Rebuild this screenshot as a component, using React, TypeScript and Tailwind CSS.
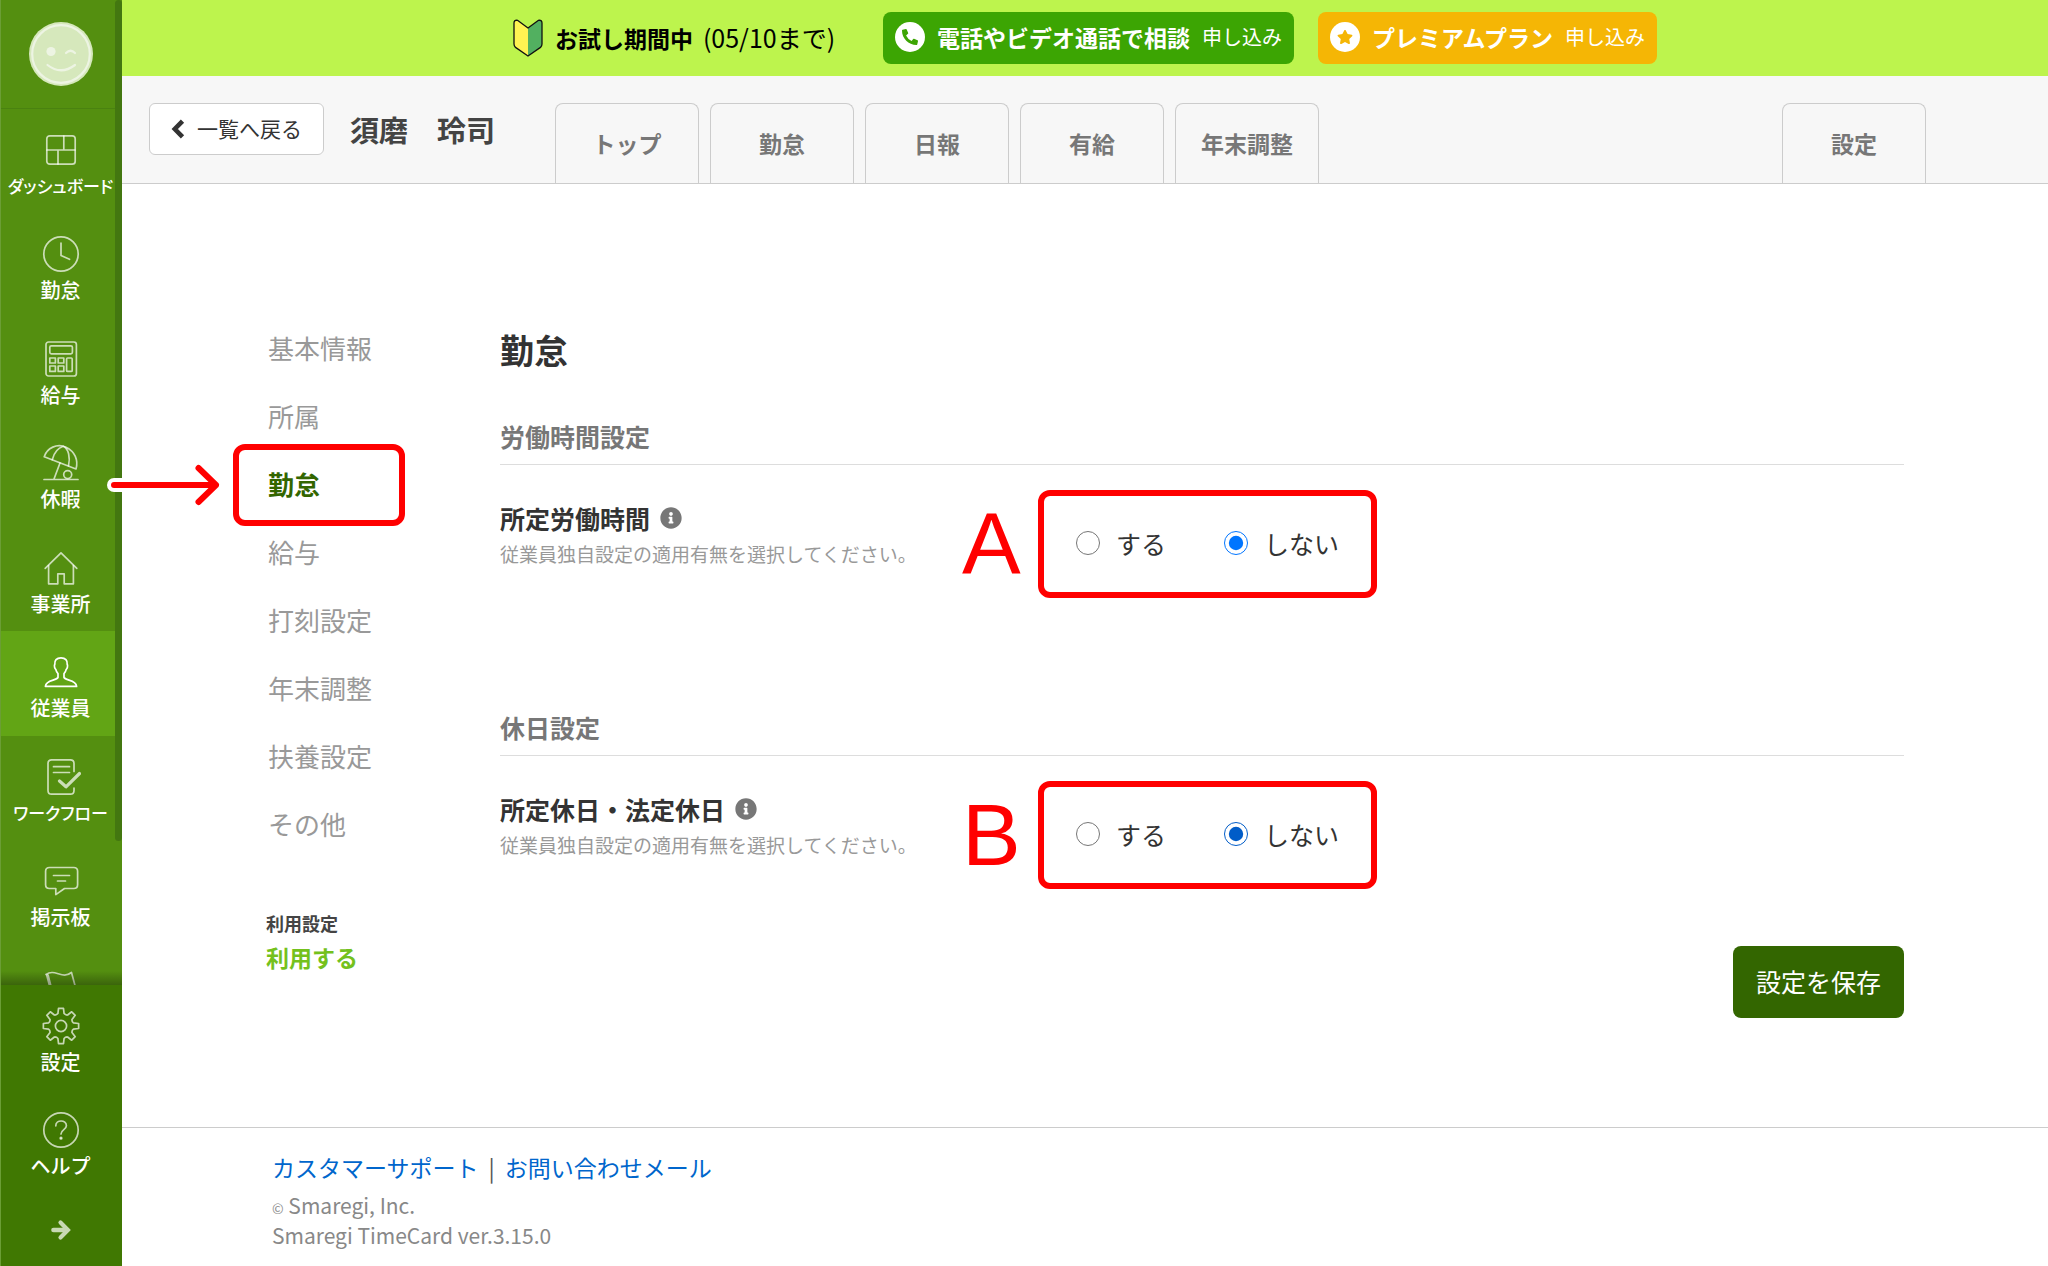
import { ReactNode, useState } from "react";
import { FaInfoCircle, FaPhoneAlt, FaStar } from "react-icons/fa";

const gearPath = () => {
  const point = (radius: number, degrees: number) => {
    const rad = (degrees * Math.PI) / 180;
    return `${(20 + radius * Math.sin(rad)).toFixed(2)} ${(20 - radius * Math.cos(rad)).toFixed(2)}`;
  };
  let d = "";
  for (let i = 0; i < 8; i++) {
    const a = i * 45;
    d += `${i === 0 ? "M" : "L"}${point(12.8, a - 14)} L${point(17.8, a - 8)} L${point(17.8, a + 8)} L${point(12.8, a + 14)} Q${point(11.6, a + 22.5)} ${point(12.8, a + 31)} `;
  }
  return d + "Z";
};

const Icon = ({ children }: { children: ReactNode }) => (
  <svg
    viewBox="0 0 40 40"
    className="h-10 w-10 shrink-0"
    fill="none"
    stroke="currentColor"
    strokeWidth="1.7"
    strokeLinecap="round"
    strokeLinejoin="round"
    aria-hidden="true"
  >
    {children}
  </svg>
);

const icons = {
  dashboard: (
    <Icon>
      <rect x="5.8" y="5.8" width="28.4" height="28.4" rx="3" />
      <path d="M6 20H34M22.8 6V20M17 20V34" />
    </Icon>
  ),
  clock: (
    <Icon>
      <circle cx="20" cy="20" r="17.2" />
      <path d="M20 9V21.5L28.5 25.3" />
    </Icon>
  ),
  calculator: (
    <Icon>
      <rect x="5" y="3" width="30.4" height="34" rx="2.5" />
      <rect x="8.8" y="6.8" width="22.6" height="8" rx="1.5" />
      <rect x="8.8" y="19" width="5.6" height="5" />
      <rect x="8.8" y="27" width="5.6" height="5.4" />
      <rect x="17.2" y="19" width="5.6" height="5" />
      <rect x="17.2" y="27" width="5.6" height="5.4" />
      <rect x="25.6" y="19" width="5.6" height="13.4" rx="1" />
    </Icon>
  ),
  umbrella: (
    <Icon>
      <path d="M3.2 13.8C6 5 16 0 25 4.2C34 8.5 37.5 17 35 26Z" />
      <path d="M11.3 16.6C13 10 17 5 22.3 3.3C27.5 6 29.5 14 27.5 22.8" />
      <path d="M19 20L13 36M3 36.5H37" />
      <circle cx="26.7" cy="31.6" r="4" />
    </Icon>
  ),
  home: (
    <Icon>
      <path d="M4.2 20.3L20 4.8L35.8 20.3" />
      <path d="M7.6 17.5V35.8H16.8V25.8H23.2V35.8H32.4V17.5" />
    </Icon>
  ),
  person: (
    <Icon>
      <path d="M20 5.8C15.5 5.8 13.4 8.4 13.8 12.4C13 13.4 13.6 16.6 14.8 17.4C15.2 19.4 16 20.6 17 21.6V25.4C15.6 29 5 27.4 4.4 34.4H35.6C35 27.4 24.4 29 23 25.4V21.6C24 20.6 24.8 19.4 25.2 17.4C26.4 16.6 27 13.4 26.2 12.4C26.6 8.4 24.5 5.8 20 5.8Z" />
    </Icon>
  ),
  workflow: (
    <Icon>
      <path d="M33 14.5V6.5Q33 2.8 29.3 2.8H10.7Q7 2.8 7 6.5V33.5Q7 37.2 10.7 37.2H29.3Q33 37.2 33 33.5V31" />
      <path d="M12.5 9.7H28.5M12.5 15.5H28.5" />
      <path d="M18.5 24L25 29.8L38.5 16.5" strokeWidth="3.2" />
    </Icon>
  ),
  board: (
    <Icon>
      <path d="M8.5 6.5H32.8Q36.6 6.5 36.6 10.3V23.7Q36.6 27.5 32.8 27.5H23.5L14.8 33.6V27.5H8.5Q4.6 27.5 4.6 23.7V10.3Q4.6 6.5 8.5 6.5Z" />
      <path d="M12.5 14.5H28.5M16.5 20H24.5" />
    </Icon>
  ),
  flag: (
    <Icon>
      <path d="M6.5 9.5L14 38" strokeWidth="3" />
      <path d="M5 8.5C14 2 21 14 30.5 6.5L35.5 25C28 31 20 20 11 27" />
    </Icon>
  ),
  gear: (
    <Icon>
      <path d={gearPath()} />
      <circle cx="20" cy="20" r="5.6" />
    </Icon>
  ),
  help: (
    <Icon>
      <circle cx="20" cy="20" r="17.2" />
      <path d="M14.8 15.8C14.8 9.4 25.4 9.4 25.4 15.8C25.4 19.6 20 19.8 20 24" />
      <circle cx="20" cy="28.2" r="0.8" fill="currentColor" />
    </Icon>
  ),
};

const sideItems = [
  { label: "ダッシュボード", icon: icons.dashboard, small: true },
  { label: "勤怠", icon: icons.clock },
  { label: "給与", icon: icons.calculator },
  { label: "休暇", icon: icons.umbrella },
  { label: "事業所", icon: icons.home },
  { label: "従業員", icon: icons.person, active: true },
  { label: "ワークフロー", icon: icons.workflow, small: true },
  { label: "掲示板", icon: icons.board },
  { label: "", icon: icons.flag },
];

const SideItem = ({
  label,
  icon,
  active,
  small,
}: {
  label: string;
  icon: ReactNode;
  active?: boolean;
  small?: boolean;
}) => (
  <a
    href="#"
    className={`flex min-h-[104px] flex-col items-center pr-0.5 pt-[21px] ${active ? "bg-[#62a515]" : ""}`}
  >
    <span className={active ? "text-white" : "text-white/70"}>{icon}</span>
    <span
      className={`mt-0.5 whitespace-nowrap font-medium leading-7 text-white ${
        small ? "text-[17px] [font-feature-settings:'palt']" : "text-xl"
      }`}
    >
      {label}
    </span>
  </a>
);

const Sidebar = () => (
  <aside className="sticky top-0 flex h-screen w-[122px] shrink-0 flex-col border-l border-[#6b9e35] bg-[#548f10]">
    <div className="relative flex flex-1 flex-col overflow-hidden">
      <div className="flex h-[109px] shrink-0 justify-center border-b border-[#4a8210] pr-0.5 pt-[22px]">
        <svg viewBox="0 0 64 64" className="h-16 w-16" fill="none" aria-hidden="true">
          <circle cx="32" cy="32" r="32" fill="#d6e8bc" />
          <circle cx="32" cy="32" r="28.8" stroke="#edf4e3" strokeWidth="2.2" />
          <circle cx="22" cy="29.5" r="4.6" fill="#edf4e3" />
          <path
            d="M37 31Q41.5 26.5 46 31M18.5 43Q32 53.5 46 43"
            stroke="#edf4e3"
            strokeWidth="2.2"
            strokeLinecap="round"
          />
        </svg>
      </div>
      <nav className="grid h-[940px] shrink-0 auto-rows-fr">
        {sideItems.map((item) => (
          <SideItem key={item.label} {...item} />
        ))}
      </nav>
      <div className="absolute right-0 top-0 h-[841px] w-[7px] rounded-full bg-[#437710]" />
      <div className="absolute inset-x-0 bottom-0 h-3.5 bg-linear-to-b from-transparent to-black/30" />
    </div>
    <div className="flex flex-col bg-[#407802]">
      <SideItem label="設定" icon={icons.gear} />
      <SideItem label="ヘルプ" icon={icons.help} />
      <button
        aria-label="メニューを開く"
        className="flex h-[73px] items-center justify-center pr-0.5 text-[#c8d9b4]"
      >
        <svg viewBox="0 0 22 22" className="h-[22px] w-[22px]" fill="none" stroke="currentColor" aria-hidden="true">
          <path d="M3.5 11H16" strokeWidth="4.6" strokeLinecap="round" />
          <path d="M10.5 3.6L17.9 11L10.5 18.400" strokeWidth="4.2" strokeLinecap="round" />
        </svg>
      </button>
    </div>
  </aside>
);

const Banner = () => (
  <div className="flex h-[76px] items-center justify-center bg-[#bdf44d] text-[23px] leading-8">
    <svg viewBox="0 0 30 38" className="mr-3 h-[38px] w-[30px]" aria-hidden="true">
      <path d="M15 9L4.5 1.2Q1 0.8 1 4V25Q1 27 2.5 28.4L15 37Z" fill="#fff352" />
      <path d="M15 9L25.5 1.2Q29 0.8 29 4V25Q29 27 27.5 28.4L15 37Z" fill="#52b060" />
      <path
        d="M15 9L4.8 1.4Q1 0.6 1 4V25Q1 27 2.5 28.4L15 37L27.5 28.4Q29 27 29 25V4Q29 0.6 25.2 1.4Z"
        fill="none"
        stroke="#111"
        strokeWidth="1.3"
        strokeLinejoin="round"
      />
    </svg>
    <p className="pb-0.5 text-black">
      <strong className="font-bold">お試し期間中</strong>
      <span className="ml-2.5 text-[25px]">(05/10まで)</span>
    </p>
    <a href="#" className="ml-12 flex h-[52px] items-center rounded-lg bg-[#3ca503] px-3 pb-0.5 text-white">
      <span className="mr-3 flex h-[30px] w-[30px] items-center justify-center rounded-full bg-white text-[#3ca503]">
        <FaPhoneAlt className="h-4 w-4" />
      </span>
      <strong className="font-bold">電話やビデオ通話で相談</strong>
      <span className="ml-3 text-xl">申し込み</span>
    </a>
    <a href="#" className="ml-6 flex h-[52px] items-center rounded-lg bg-[#f5b605] px-3 pb-0.5 text-white">
      <span className="mr-3 flex h-[30px] w-[30px] items-center justify-center rounded-full bg-white text-[#f5b605]">
        <FaStar className="h-4 w-4" />
      </span>
      <strong className="font-bold">プレミアムプラン</strong>
      <span className="ml-3 text-xl">申し込み</span>
    </a>
  </div>
);

const Tab = ({ label }: { label: string }) => (
  <a
    href="#"
    className="flex h-20 w-36 items-center justify-center rounded-t-lg border border-b-0 border-[#ccc] text-[23px] font-bold text-[#777]"
  >
    {label}
  </a>
);

const Header = () => (
  <header className="flex h-[108px] items-start border-b border-[#ccc] bg-[#f7f7f7] pl-[27px] pr-[122px] pt-[27px]">
    <a
      href="#"
      className="flex h-[52px] w-[175px] items-center justify-center gap-3 rounded-md border border-[#ccc] bg-white text-[21px] text-[#333]"
    >
      <svg viewBox="0 0 14 20" className="h-5 w-3.5" fill="none" stroke="currentColor" aria-hidden="true">
        <path d="M11.500 2.200L3.800 10L11.500 17.800" strokeWidth="4.6" />
      </svg>
      一覧へ戻る
    </a>
    <h1 className="ml-[26px] w-[205px] whitespace-nowrap text-[29px] font-bold leading-[52px] text-[#444]">
      須磨　玲司
    </h1>
    <nav className="flex flex-1 gap-[11px]">
      {["トップ", "勤怠", "日報", "有給", "年末調整"].map((label) => (
        <Tab key={label} label={label} />
      ))}
    </nav>
    <Tab label="設定" />
  </header>
);

const settingsMenu = ["基本情報", "所属", "勤怠", "給与", "打刻設定", "年末調整", "扶養設定", "その他"];

const SettingsMenu = () => (
  <aside className="w-[234px] shrink-0 pt-[129px]">
    <ul>
      {settingsMenu.map((label) =>
        label === "勤怠" ? (
          <li key={label} className="relative flex h-[68px] items-center pl-0.5 text-[26px]">
            <a href="#" className="font-bold text-[#336600]">
              {label}
            </a>
            <div className="pointer-events-none absolute -left-[33px] -top-[5px] h-[82px] w-[172px] rounded-xl border-6 border-[#f00]" />
            <svg
              viewBox="0 0 120 52"
              className="pointer-events-none absolute -left-40 top-2.5 h-[52px] w-[120px]"
              fill="none"
              strokeLinecap="round"
              strokeLinejoin="round"
              aria-hidden="true"
            >
              <path d="M8 26H106" stroke="#fff" strokeWidth="14" />
              <path d="M8 26H110M92.5 9L110 26L92.5 43" stroke="#f00" strokeWidth="6" />
            </svg>
          </li>
        ) : (
          <li key={label} className="flex h-[68px] items-center pl-0.5 text-[26px]">
            <a href="#" className="text-[#999]">
              {label}
            </a>
          </li>
        ),
      )}
    </ul>
    <dl className="mt-[50px] font-bold">
      <dt className="text-lg leading-8 text-[#444]">利用設定</dt>
      <dd className="mt-0.5 text-[23px] leading-8 text-[#74c11d]">利用する</dd>
    </dl>
  </aside>
);

const SettingSection = ({
  heading,
  title,
  name,
  mark,
  accent,
}: {
  heading: string;
  title: string;
  name: string;
  mark: string;
  accent: string;
}) => {
  const [value, setValue] = useState("しない");

  return (
    <section>
      <h3 className="border-b border-[#ddd] pb-2.5 text-[25px] font-bold leading-9 text-[#777]">{heading}</h3>
      <div className="mt-[25px] flex items-start">
        <div className="w-[538px] shrink-0 pt-2.5">
          <h4 className="flex items-center gap-2.5 text-[25px] font-bold leading-9 text-[#333]">
            {title}
            <FaInfoCircle className="h-[22px] w-[22px] text-[#777]" />
          </h4>
          <p className="mt-1 text-[19px] leading-7 text-[#999]">従業員独自設定の適用有無を選択してください。</p>
        </div>
        <div className="relative flex h-[108px] items-center gap-[58px] rounded-xl border-6 border-[#f00] px-8 text-[25px] text-[#333]">
          <span className="absolute right-full mr-6 w-[58px] font-['Liberation_Sans',sans-serif] text-[88px] leading-none text-[#f00]">
            {mark}
          </span>
          {["する", "しない"].map((option) => (
            <label key={option} className="flex items-center gap-4">
              <input
                type="radio"
                name={name}
                value={option}
                checked={value === option}
                onChange={() => setValue(option)}
                className={`mb-0.5 h-6 w-6 ${accent}`}
              />
              {option}
            </label>
          ))}
        </div>
      </div>
    </section>
  );
};

const Footer = () => (
  <footer className="border-t border-[#ccc] pb-4 pl-[150px] pt-[23px] text-[21px] leading-[30px] text-[#888]">
    <p className="text-[23px] leading-8">
      <a href="#" className="text-[#0066cc]">
        カスタマーサポート
      </a>
      <span className="mx-2.5 text-[#555]">|</span>
      <a href="#" className="text-[#0066cc]">
        お問い合わせメール
      </a>
    </p>
    <div className="mt-[7px]">
      <p>
        <span className="text-sm">©</span> Smaregi, Inc.
      </p>
      <p>Smaregi TimeCard ver.3.15.0</p>
    </div>
  </footer>
);

const App = () => {
  return (
    <div className="flex min-h-screen bg-white font-['Noto_Sans_CJK_JP',sans-serif]">
      <Sidebar />
      <div className="flex min-w-0 flex-1 flex-col">
        <Banner />
        <Header />
        <div className="flex flex-1 px-36">
          <SettingsMenu />
          <main className="min-w-0 flex-1 pb-[108px] pt-36">
            <h2 className="text-[34px] font-bold leading-[44px] text-[#333]">勤怠</h2>
            <div className="mt-[46px] flex flex-col gap-[111px]">
              <SettingSection
                heading="労働時間設定"
                title="所定労働時間"
                name="workHours"
                mark="A"
                accent="accent-[#0075ff]"
              />
              <SettingSection
                heading="休日設定"
                title="所定休日・法定休日"
                name="holidays"
                mark="B"
                accent="accent-[#005cc8]"
              />
            </div>
            <div className="mt-[57px] flex justify-end">
              <button className="h-[72px] rounded-lg bg-[#336600] px-[23px] text-[25px] text-white">
                設定を保存
              </button>
            </div>
          </main>
        </div>
        <Footer />
      </div>
    </div>
  );
};

export default App;
